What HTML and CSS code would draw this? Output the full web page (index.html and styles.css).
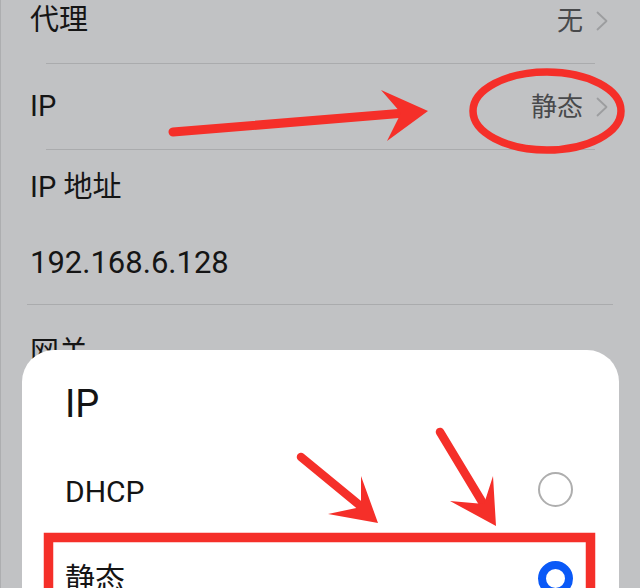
FILE: index.html
```html
<!DOCTYPE html>
<html lang="zh-CN">
<head>
<meta charset="utf-8">
<title>IP 设置</title>
<link rel="stylesheet" href="styles.css">
</head>
<body>
<div class="screen">
  <div class="list">
    <div class="row">
      <span class="label">代理</span>
      <span class="value">无<svg class="chev" viewBox="0 0 12 20" width="12" height="20"><path d="M1.5 1.5 L10.5 10 L1.5 18.5" fill="none" stroke="#9c9d9f" stroke-width="1.8" stroke-linecap="round" stroke-linejoin="round"/></svg></span>
    </div>
    <div class="divider"></div>
    <div class="row">
      <span class="label">IP</span>
      <span class="value">静态<svg class="chev" viewBox="0 0 12 20" width="12" height="20"><path d="M1.5 1.5 L10.5 10 L1.5 18.5" fill="none" stroke="#9c9d9f" stroke-width="1.8" stroke-linecap="round" stroke-linejoin="round"/></svg></span>
    </div>
    <div class="divider"></div>
    <div class="field">
      <div class="label">IP 地址</div>
      <div class="field-value">192.168.6.128</div>
    </div>
    <div class="divider wide"></div>
    <div class="field next">
      <div class="label">网关</div>
    </div>
  </div>

  <div class="dialog">
    <div class="dialog-title">IP</div>
    <div class="option">
      <span class="option-label">DHCP</span>
      <span class="radio"></span>
    </div>
    <div class="option">
      <span class="option-label">静态</span>
      <span class="radio checked"></span>
    </div>
  </div>

  <svg class="annot" viewBox="0 0 640 588" width="640" height="588">
    <g fill="#f52f29" stroke="none">
      <ellipse cx="546" cy="111" rx="74" ry="39" fill="none" stroke="#f52f29" stroke-width="7.5"/>
      <line x1="172" y1="132" x2="404" y2="113" stroke="#f52f29" stroke-width="9" stroke-linecap="round"/>
      <polygon points="427,111 380,90 400,113 386,141"/>
      <line x1="300" y1="457" x2="362" y2="508" stroke="#f52f29" stroke-width="8.5" stroke-linecap="round"/>
      <polygon points="377,523 360,476 360,507 327,514"/>
      <line x1="439" y1="432" x2="483" y2="505" stroke="#f52f29" stroke-width="8.5" stroke-linecap="round"/>
      <polygon points="495,526 492,476 483,504 449,501"/>
      <rect x="47.5" y="537.5" width="542" height="120" fill="none" stroke="#f52f29" stroke-width="9.5"/>
    </g>
  </svg>
</div>
</body>
</html>
```

FILE: styles.css
```css
html, body {
  margin: 0;
  padding: 0;
}

body {
  background: #c1c2c4;
  font-family: Roboto, "Noto Sans CJK SC", sans-serif;
  color: #171717;
}

.screen {
  position: relative;
  width: 640px;
  height: 588px;
  overflow: hidden;
  background: #c1c2c4;
  border-left: 1px solid #adaeb0;
  box-sizing: border-box;
}

.list {
  margin-top: -22px;
}

.row {
  height: 85px;
  display: flex;
  align-items: center;
  justify-content: space-between;
  padding: 0 32px 0 29px;
}

.label {
  font-size: 29px;
  line-height: 29px;
  color: #151515;
}

.value {
  display: flex;
  align-items: center;
  gap: 13px;
  font-size: 26px;
  line-height: 26px;
  color: #48494b;
}

.chev {
  display: block;
}

.divider {
  height: 1px;
  background: #aaabad;
  margin: 0 45px 0 45px;
}

.divider.wide {
  margin: 0 27px 0 26px;
}

.field {
  padding: 24px 29px 28px;
}

.field .label {
  line-height: 26px;
}

.field-value {
  margin-top: 50px;
  font-size: 31px;
  line-height: 26px;
  color: #151515;
}

.field.next {
  padding-top: 34px;
}

.dialog {
  position: absolute;
  left: 21px;
  top: 350px;
  width: 597px;
  height: 300px;
  background: #ffffff;
  border-radius: 32px 32px 0 0;
  box-sizing: border-box;
  padding: 35px 46px 0 43px;
}

.dialog-title {
  font-size: 38px;
  line-height: 38px;
  color: #141414;
}

.option {
  height: 87px;
  display: flex;
  align-items: center;
  justify-content: space-between;
}

.dialog-title + .option {
  margin-top: 25px;
}

.option-label {
  font-size: 30px;
  line-height: 30px;
  color: #141414;
}

.radio {
  width: 35px;
  height: 35px;
  border-radius: 50%;
  border: 2px solid #aeaeae;
  box-sizing: border-box;
  margin-top: -4px;
}

.radio.checked {
  border: 8px solid #0a59f7;
  margin-top: 0;
}

.annot {
  position: absolute;
  left: 0;
  top: 0;
  pointer-events: none;
}
```
